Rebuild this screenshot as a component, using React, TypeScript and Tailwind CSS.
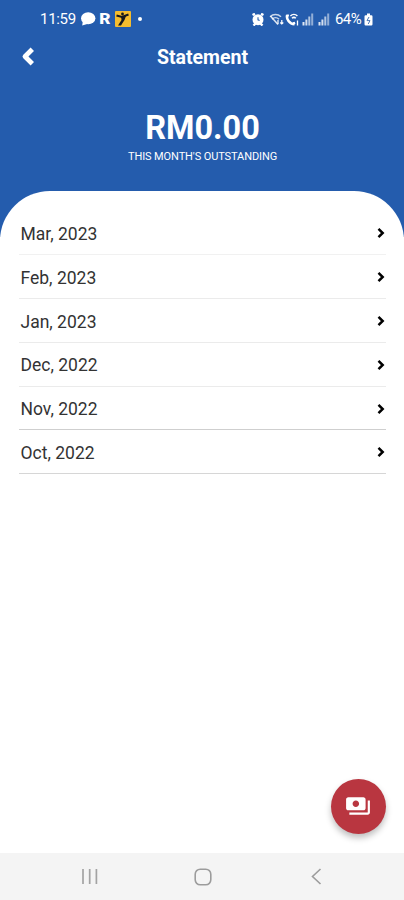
import { MdPayments } from "react-icons/md";

const months = [
  { label: "Mar, 2023", line: "border-[#f1f1f1]" },
  { label: "Feb, 2023", line: "border-[#ebebeb]" },
  { label: "Jan, 2023", line: "border-[#ebebeb]" },
  { label: "Dec, 2022", line: "border-[#ebebeb]" },
  { label: "Nov, 2022", line: "border-[#cfcfcf]" },
  { label: "Oct, 2022", line: "border-[#d6d6d6]" },
];

function SignalIcon({ className }: { className?: string }) {
  return (
    <svg className={className} width="12" height="13" viewBox="0 0 12 13" fill="#fff">
      <rect x="0.5" y="9" width="2" height="3.5" opacity="0.85" />
      <rect x="3.4" y="6.5" width="2" height="6" opacity="0.8" />
      <rect x="6.3" y="3.5" width="2" height="9" opacity="0.65" />
      <rect x="9.2" y="0.5" width="2" height="12" opacity="0.5" />
    </svg>
  );
}

function StatusBar() {
  return (
    <div className="flex h-[38px] items-center justify-between pl-[40px] pr-[31px] text-white">
      <div className="flex items-center">
        <span className="w-[36px] whitespace-nowrap text-[15px] tracking-[-0.3px]">11:59</span>
        {/* Chat bubble */}
        <svg className="ml-[4px]" width="16" height="14" viewBox="0 0 16 14" fill="#fff">
          <ellipse cx="8.2" cy="6.2" rx="7.2" ry="6" />
          <path d="M3 8 2.2 13.6 9 11.6z" />
        </svg>
        {/* R logo */}
        <span className="ml-[4px] flex w-[11px] items-center">
          <span className="scale-x-115 text-[15px] leading-none font-black">R</span>
        </span>
        <svg className="ml-[4px]" width="16" height="16" viewBox="0 0 16 16">
          <rect width="16" height="16" rx="1" fill="#f5bd2e" />
          <path d="M1.5 4.5 7 6l6.5-2.5" fill="none" stroke="#17191d" strokeWidth="2" />
          <path d="M6 5h5l-1.5 4-3.5 5.500H3L6.500 9z" fill="#17191d" />
          <circle cx="7.500" cy="3" r="1.400" fill="#17191d" />
        </svg>
        <span className="ml-[7px] h-1 w-1 rounded-full bg-white" />
      </div>

      <div className="flex items-center">
        {/* Alarm */}
        <svg width="12" height="13" viewBox="0 0 12 13">
          <path d="M.5 2 3 .8M11.500 2 9 .8M1.500 12.500l2-2M10.500 12.500l-2-2" stroke="#fff" strokeWidth="2.400" />
          <circle cx="6" cy="6.700" r="5.500" fill="#fff" />
          <path d="M6 4.200v2.600l1.600.8" fill="none" stroke="#2860b0" strokeWidth="1.100" />
        </svg>
        {/* Wi-Fi */}
        <svg className="ml-[5px]" width="15" height="13" viewBox="0 0 15 13" fill="none" stroke="#fff">
          <path d="M1 3.800c3.200-3 7.800-3 11 0M3 6.300c2-2 5-2 7 0" strokeWidth="1.500" opacity="0.75" />
          <path d="M1.500 3 9 11.500" strokeWidth="1.500" opacity="0.85" />
          <path d="M9 7v4M12.800 7v4M11.300 9.500l1.500 1.500 1.500-1.500" strokeWidth="1.200" />
        </svg>
        {/* Wi-Fi call */}
        <svg className="ml-[1px]" width="14" height="13" viewBox="0 0 14 13" fill="none" stroke="#fff">
          <path d="M2.200 2C1 6 4.500 11 9.500 11.300" strokeWidth="2.600" />
          <path d="M1.500 2.600h2.400M8.800 9l.7 2.300" strokeWidth="2" />
          <path d="M5.400 3c2-2 5-2 7 0M7 5.200c1-1 2.800-1 3.800 0" strokeWidth="1.500" />
          <path d="M12.500 7.500v5" strokeWidth="1.300" />
        </svg>
        <SignalIcon className="ml-[3px]" />
        <SignalIcon className="ml-[4px]" />
        <span className="ml-[5px] w-[28px] whitespace-nowrap text-[15px] tracking-[-0.6px]">64%</span>
        {/* Battery */}
        <svg className="ml-[1px]" width="9" height="13" viewBox="0 0 9 13">
          <path d="M3 .5h3v1.800h1.300q1.200 0 1.200 1.200v7.800q0 1.200-1.200 1.200H1.700Q.5 12.500.5 11.300V3.500q0-1.200 1.200-1.200H3z" fill="#fff" />
          <path d="M5 4 3 7.600h3L4.200 11" fill="none" stroke="#4b77b6" strokeWidth="1" />
        </svg>
      </div>
    </div>
  );
}

function NavBar() {
  return (
    <nav className="flex h-[47px] shrink-0 items-center justify-between bg-[#f4f4f4] pr-[82px] pl-[81px]">
      <svg width="17" height="17" viewBox="0 0 17 17" stroke="#a3a3a3" strokeWidth="1.7">
        <path d="M2 1v15M8.700 1v15M15.400 1v15" />
      </svg>
      <svg className="mr-[3px]" width="18" height="18" viewBox="0 0 18 18" fill="none" stroke="#9c9c9c" strokeWidth="1.6">
        <rect x="1.2" y="1.2" width="15.6" height="15.6" rx="5" />
      </svg>
      <svg width="11" height="17" viewBox="0 0 11 17" fill="none" stroke="#9c9c9c" strokeWidth="1.6">
        <path d="M9.500 1 1.500 8.500l8 7.500" />
      </svg>
    </nav>
  );
}

export default function App() {
  return (
    <div className="relative flex h-[900px] w-[404px] flex-col overflow-hidden bg-white font-['Roboto',sans-serif]">
      <header className="h-[237px] shrink-0 bg-[#245cad] text-white">
        <StatusBar />
        <div className="grid h-[38px] grid-cols-[1fr_auto_1fr] items-center">
          <svg className="mb-[2px] ml-[21px]" width="14" height="19" viewBox="0 0 14 19" fill="none" stroke="#fff" strokeWidth="4.8" strokeLinejoin="round">
            <path d="M11.300 2.200 4 9.500l7.300 7.300" />
          </svg>
          <h1 className="pt-[1px] pl-[1px] text-[19.5px] leading-none font-bold">Statement</h1>
        </div>
        <div className="pt-[35px] pl-[1px] text-center">
          <p className="text-[32.5px] leading-[35px] font-bold">RM0.00</p>
          <p className="mt-[3px] text-[11px] leading-[15px] tracking-[-0.1px]">THIS MONTH'S OUTSTANDING</p>
        </div>
      </header>

      {/* Statement list */}
      <main className="z-10 -mt-[46px] flex-1 rounded-t-[50px] bg-white pt-[20px] pr-[18px] pl-[19px]">
        {months.map((month) => (
          <div
            key={month.label}
            className={`flex h-[43.9px] items-center justify-between border-b pr-[1px] pl-[1.5px] ${month.line}`}
          >
            <span className="pt-[3px] text-[17.5px] text-[#333]">{month.label}</span>
            <svg className="mt-[1px]" width="8" height="12" viewBox="0 0 8 12" fill="none" stroke="#000" strokeWidth="2.5">
              <path d="m1.500 1.800 4.200 4.200-4.200 4.200" />
            </svg>
          </div>
        ))}
      </main>

      <button
        aria-label="Pay"
        className="absolute right-[18.5px] bottom-[66.5px] z-20 flex h-[54.5px] w-[54.5px] items-center justify-center rounded-full bg-[#b93640] pr-[1px] text-white shadow-[0_4px_6px_rgba(0,0,0,0.25)]"
      >
        <MdPayments size={26} />
      </button>

      <NavBar />
    </div>
  );
}
